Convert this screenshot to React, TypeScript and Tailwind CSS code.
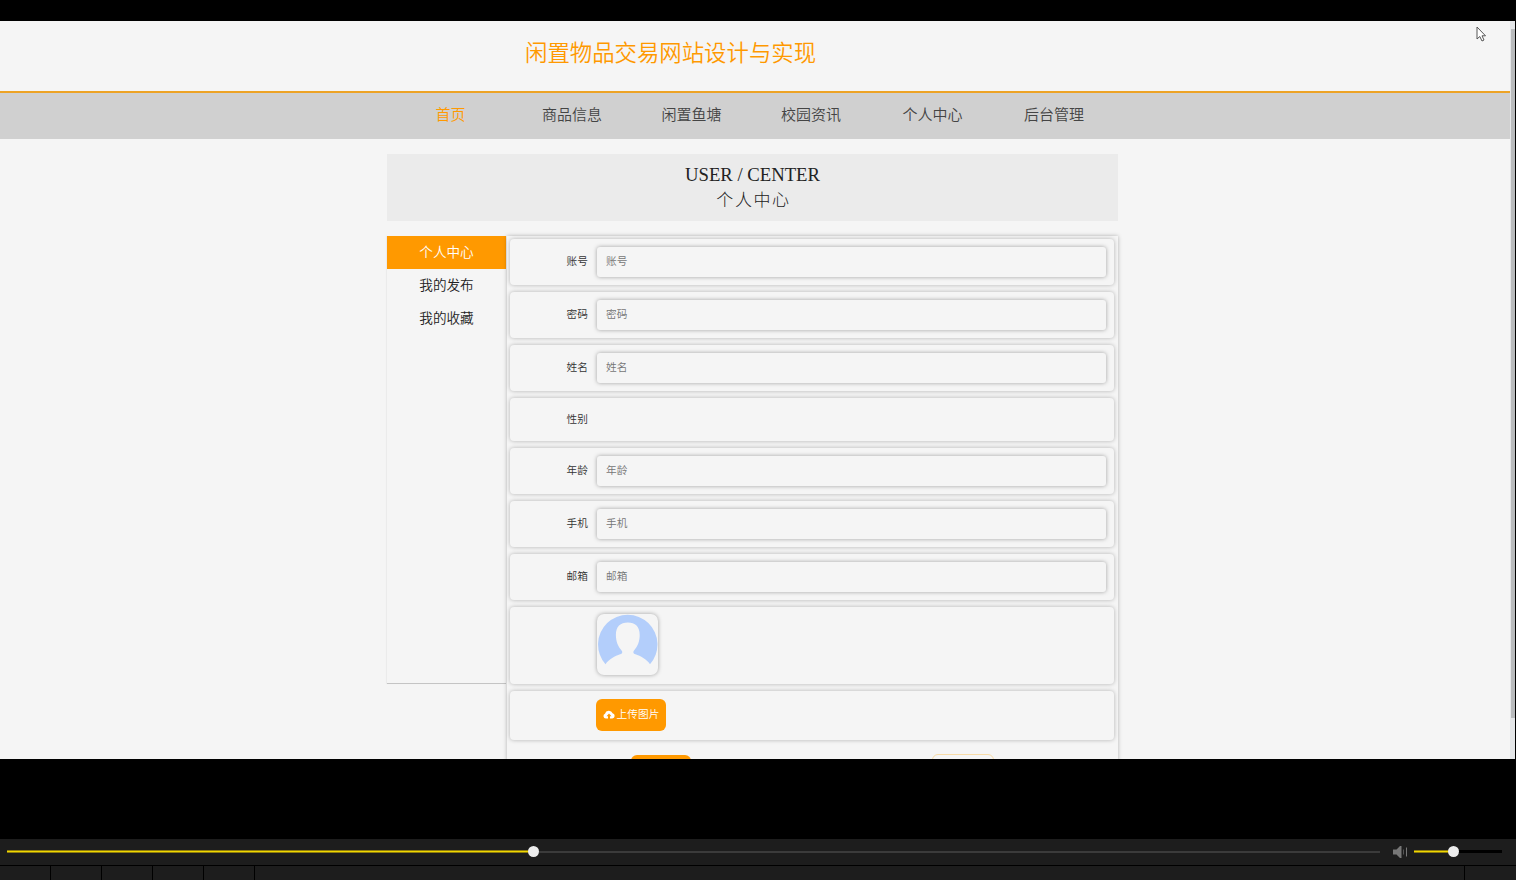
import React, { useState } from 'react';

interface Field {
  label: string;
  input: boolean;
}

const navItems = [
  { label: '首页', space: 'ml-[435.5px]' },
  { label: '商品信息', space: 'ml-[76.5px]' },
  { label: '闲置鱼塘', space: 'ml-[59.5px]' },
  { label: '校园资讯', space: 'ml-[59.5px]' },
  { label: '个人中心', space: 'ml-[61.5px]' },
  { label: '后台管理', space: 'ml-[61.5px]' },
];

const menuItems = ['个人中心', '我的发布', '我的收藏'];

const fields: Field[] = [
  { label: '账号', input: true },
  { label: '密码', input: true },
  { label: '姓名', input: true },
  { label: '性别', input: false },
  { label: '年龄', input: true },
  { label: '手机', input: true },
  { label: '邮箱', input: true },
];

const cardClass = 'ml-[3px] w-[604px] shrink-0 rounded-[4px] bg-[#f5f5f5] shadow-[0_0_4px_rgba(0,0,0,0.28)]';

const Avatar: React.FC = () => (
  <svg viewBox="0 0 61 61" className="w-[61px] h-[61px]">
    <path
      fill="#b3cefb"
      d="M8.500 50.200A29.700 29.700 0 1 1 53 50.200C49.500 44.800 43.500 42 38.500 40.200C36 39.300 35.800 38 37.200 36.200C40.500 32.500 42.700 27.500 42.700 21C42.700 12.500 38.200 8.500 30.800 8.500C23.400 8.500 18.900 12.500 18.900 21C18.900 27.500 21.100 32.500 24.400 36.200C25.800 38 25.600 39.300 23.100 40.200C18.100 42 12.100 44.800 8.500 50.200Z"
    />
  </svg>
);

const CloudUpload: React.FC = () => (
  <svg viewBox="0 0 12 9" className="w-[12px] h-[9px]">
    <path
      fill="#fff"
      d="M2.800 8.500A2.500 2.500 0 0 1 2 3.700A4 4 0 0 1 9.600 3.200A2.700 2.700 0 0 1 9.300 8.500H7V6.300H8.500L6 3.600L3.500 6.300H5V8.500Z"
    />
  </svg>
);

const Player: React.FC = () => (
  <div className="h-[41px] bg-[#1d1d1d] flex flex-col">
    <div className="h-[26px] flex items-center pb-px">
      <div className="relative ml-[7px] w-[1373px] h-[3px] flex items-center">
        <div className="w-[526px] h-[3px] bg-[#f0d800] border-y border-[#8f7d0d]"></div>
        <div className="flex-1 h-[2px] bg-[#3b3b3b]"></div>
        <div className="absolute left-[521px] -top-[4px] w-[11px] h-[11px] rounded-full bg-[#ececec]"></div>
      </div>
      <svg viewBox="0 0 16 14" className="ml-[12px] w-[16px] h-[14px]">
        <path fill="#777" d="M1 4.500H4.500L8 1H9.500V13H8L4.500 9.500H1Z" />
        <path fill="#555" d="M11 4.500H12V9.500H11Z" />
        <path fill="#777" d="M14 2.500H15V11.500H14Z" />
      </svg>
      <div className="relative ml-[6px] w-[88px] h-[3px] flex items-center">
        <div className="w-[39px] h-[3px] bg-[#f0d800] border-y border-[#8f7d0d]"></div>
        <div className="flex-1 h-[3px] bg-black"></div>
        <div className="absolute left-[34px] -top-[4px] w-[11px] h-[11px] rounded-full bg-[#ececec]"></div>
      </div>
    </div>
    <div className="flex-1 border-t border-black flex">
      <div className="w-[51px] border-r border-black"></div>
      <div className="w-[51px] border-r border-black"></div>
      <div className="w-[51px] border-r border-black"></div>
      <div className="w-[51px] border-r border-black"></div>
      <div className="w-[51px] border-r border-black"></div>
      <div className="w-[1210px] border-r border-black"></div>
    </div>
  </div>
);

const App: React.FC = () => {
  const [active, setActive] = useState('个人中心');

  return (
    <div className="relative w-[1516px] h-[880px] overflow-hidden bg-black pt-[21px] flex flex-col font-['Noto_Sans_CJK_SC',sans-serif] font-[350]">
      <div className="h-[738px] flex pr-px">
        <div className="w-[1510px] h-full overflow-hidden bg-[#f5f5f5] flex flex-col">
          <header className="h-[70px] shrink-0 pl-[525px] pt-[14px]">
            <h1 className="text-[22.4px] leading-[32px] text-[#ff9900] whitespace-nowrap">闲置物品交易网站设计与实现</h1>
          </header>
          <nav className="h-[48px] shrink-0 border-t-2 border-[#eda325] bg-[#d0d0d0] flex items-center pb-[3px] text-[15px] text-[#444]">
            {navItems.map((item, i) => (
              <a key={item.label} className={`${item.space} whitespace-nowrap ${i === 0 ? 'text-[#ff9900]' : ''}`}>
                {item.label}
              </a>
            ))}
          </nav>

          <main className="ml-[387px] mt-[15px] w-[731px]">
            <div className="h-[67px] bg-[#ebebeb] flex flex-col items-center pt-[8px] text-[#222]">
              <div className="font-['Liberation_Serif',serif] font-normal text-[18.7px] leading-[26px]">USER / CENTER</div>
              <div className="text-[17px] leading-[22px] tracking-[1.6px] pl-[2px] font-light">个人中心</div>
            </div>

            <div className="mt-[15px] flex items-start">
              <aside className="w-[119px] h-[448px] shrink-0 border-b border-[#c4c4c4] shadow-[-1px_0_1px_rgba(0,0,0,0.04)] text-[13.6px] text-[#222]">
                {menuItems.map(item => (
                  <div
                    key={item}
                    onClick={() => setActive(item)}
                    className={`h-[33px] pb-[2px] flex items-center justify-center ${active === item ? 'bg-[#ff9900] text-white' : ''}`}
                  >
                    {item}
                  </div>
                ))}
              </aside>

              <section className="ml-[1px] w-[611px] h-[620px] pt-[3px] flex flex-col gap-[7px] bg-[#f5f5f5] shadow-[0_0_4px_rgba(0,0,0,0.28)] text-[10.7px] text-[#333]">
                {fields.map(field => (
                  <div key={field.label} className={`${cardClass} flex ${field.input ? 'h-[46px] pt-[8px]' : 'h-[43px] pt-[7px]'}`}>
                    <label className="w-[78px] h-[30px] leading-[27px] text-right whitespace-nowrap">{field.label}</label>
                    {field.input && (
                      <input
                        type="text"
                        placeholder={field.label}
                        className="ml-[9px] w-[509px] h-[29.5px] pl-[9px] pb-[2px] rounded-[3px] bg-[#f5f5f5] shadow-[0_0_4px_rgba(0,0,0,0.35)] outline-none placeholder:text-[#757575]"
                      />
                    )}
                  </div>
                ))}
                <div className={`${cardClass} h-[77px] pt-[7px] pl-[86.5px]`}>
                  <div className="w-[61px] h-[61px] rounded-[7px] shadow-[0_0_4px_rgba(0,0,0,0.35)]">
                    <Avatar />
                  </div>
                </div>
                <div className={`${cardClass} h-[49px] pt-[8px] pl-[86px]`}>
                  <button className="w-[70px] h-[32px] pb-px rounded-[6px] bg-[#ff9900] text-white flex items-center justify-center gap-[2px] whitespace-nowrap">
                    <CloudUpload />
                    上传图片
                  </button>
                </div>
                <div className="flex mt-[7px] pl-[124px]">
                  <button className="mt-[1px] w-[60px] h-[33px] rounded-[6px] bg-[#ff9900]"></button>
                  <button className="ml-[241px] w-[62px] h-[33px] rounded-[6px] border border-[#f8dca8]"></button>
                </div>
              </section>
            </div>
          </main>
        </div>
        <div className="w-[5px] h-full bg-[#e4e6e8] pt-[8px] pl-px">
          <div className="h-[689px] bg-[#b9bbbd]"></div>
        </div>
      </div>
      <div className="h-[80px] shrink-0 bg-black"></div>
      <Player />

      <svg viewBox="0 0 10 16" className="absolute left-[1476px] top-[26px] w-[10px] h-[16px]">
        <path d="M1 1V13L3.800 10.500L6 15L8 14L6 9.800H9.500Z" fill="#fff" stroke="#555" strokeWidth="1" />
      </svg>
    </div>
  );
};

export default App;
